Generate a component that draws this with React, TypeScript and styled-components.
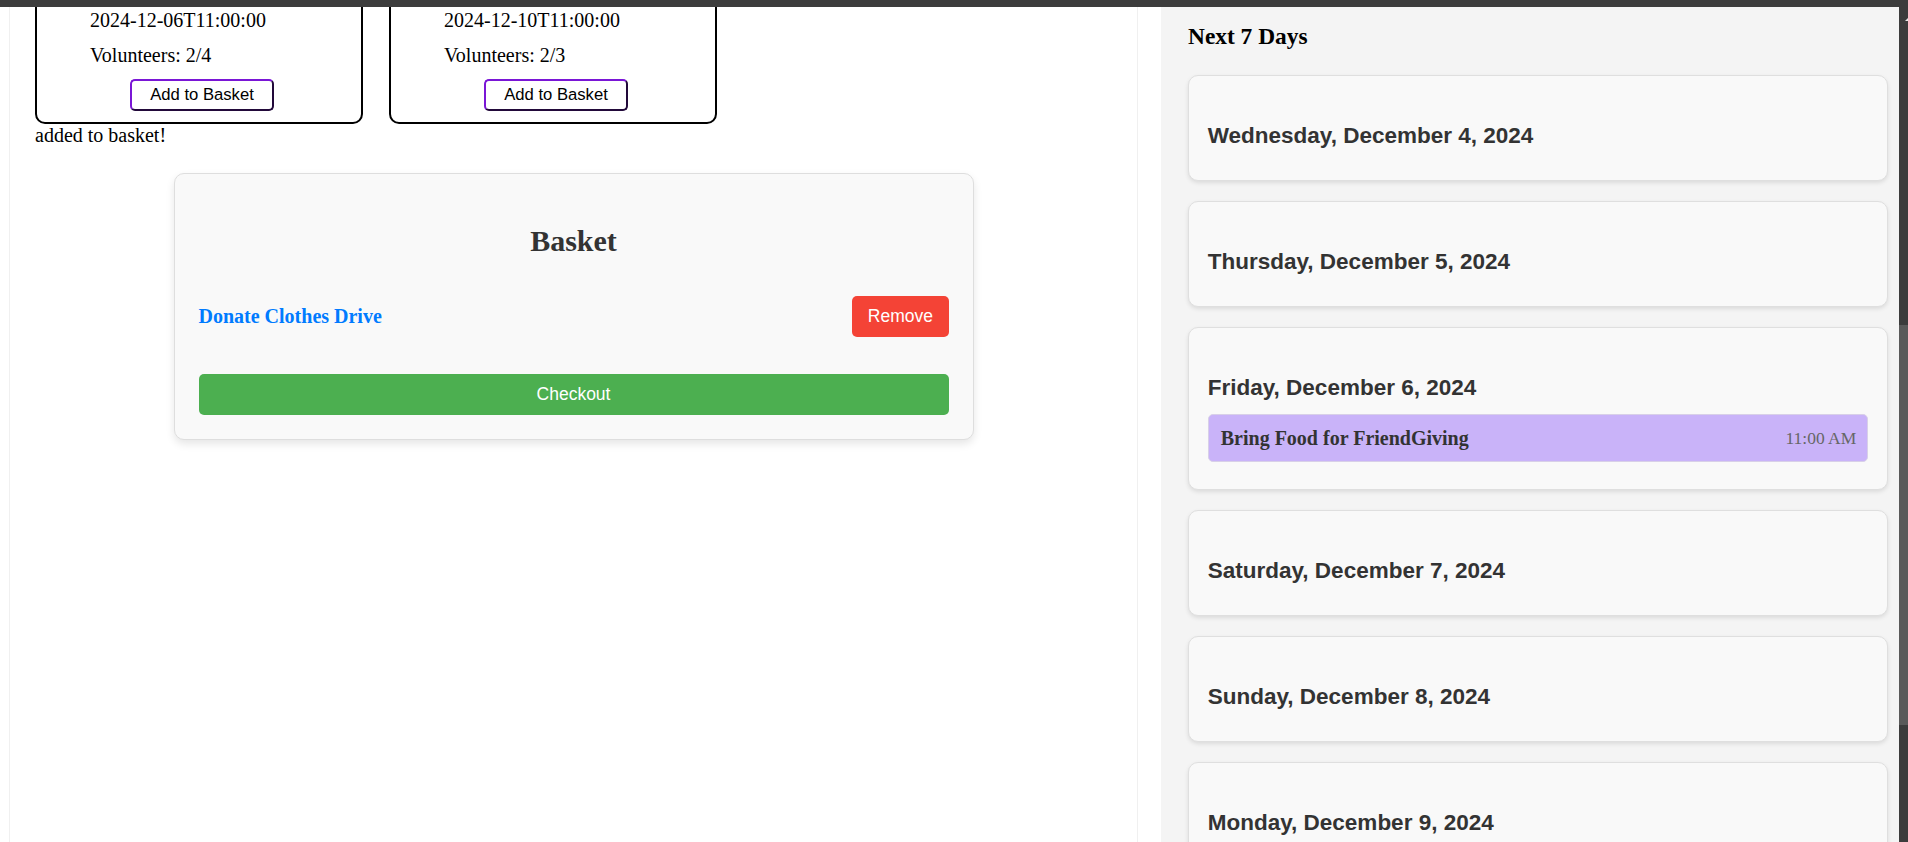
import React from "react";
import styled, { createGlobalStyle } from "styled-components";

const GlobalStyle = createGlobalStyle`
  html, body {
    margin: 0;
    padding: 0;
    background: #ffffff;
    overflow: hidden;
  }
  body {
    font-family: "Liberation Serif", "Times New Roman", serif;
    font-size: 20px;
    color: #000;
  }
  * { box-sizing: border-box; }
`;

const Screen = styled.div`
  display: flex;
  flex-direction: column;
  width: 1908px;
  height: 842px;
  overflow: hidden;
`;

const TopBar = styled.div`
  flex: none;
  height: 7px;
  background: #3c3c3c;
`;

const Body = styled.div`
  flex: 1;
  min-height: 0;
  display: flex;
`;

const Main = styled.main`
  flex: none;
  margin-left: 9px;
  width: 1129px;
  border-left: 1px solid #f0f0f0;
  border-right: 1px solid #f0f0f0;
  padding: 0 25px;
  overflow: hidden;
`;

const EventRow = styled.div`
  display: flex;
  gap: 26px;
  margin-top: -12px;
`;

const EventCard = styled.div`
  width: 328px;
  border: 2px solid #000;
  border-radius: 10px;
  padding: 12px 53px 11px 53px;
  display: flex;
  flex-direction: column;
  gap: 12px;
`;

const CardLine = styled.p`
  margin: 0;
  line-height: 23px;
  font-size: 20px;
`;

const AddButton = styled.button`
  align-self: center;
  margin-left: 6px;
  height: 32px;
  padding: 0 18px;
  background: #ffffff;
  border: 2px solid;
  border-color: #7a16d6 #22093a #22093a #7a16d6;
  border-radius: 5px;
  font-family: "Liberation Sans", Arial, sans-serif;
  font-size: 16.67px;
  color: #000;
  line-height: 18px;
`;

const Status = styled.div`
  line-height: 23px;
  font-size: 20px;
`;

const BasketPanel = styled.section`
  width: 800px;
  margin: 26px auto 0;
  padding: 24px;
  background: #f9f9f9;
  border: 1px solid #dedede;
  border-radius: 10px;
  box-shadow: 0 4px 8px rgba(0, 0, 0, 0.1);
`;

const BasketTitle = styled.h2`
  margin: 25px 0;
  font-size: 30px;
  line-height: 35px;
  text-align: center;
  color: #333;
  font-weight: bold;
`;

const BasketItem = styled.div`
  display: flex;
  align-items: center;
  justify-content: space-between;
  padding: 13px 0;
`;

const ItemName = styled.span`
  font-weight: bold;
  font-size: 20px;
  color: #007bff;
`;

const ActionButton = styled.button<{ $variant: "remove" | "checkout" }>`
  height: 41px;
  padding: 0 15.5px;
  border: none;
  border-radius: 5px;
  color: #ffffff;
  font-family: "Liberation Sans", Arial, sans-serif;
  font-size: 17.5px;
  background: ${(p) => (p.$variant === "remove" ? "#f44336" : "#4caf50")};
  width: ${(p) => (p.$variant === "checkout" ? "100%" : "auto")};
  margin-top: ${(p) => (p.$variant === "checkout" ? "24px" : "0")};
  display: block;
`;

const Gap = styled.div`
  flex: none;
  width: 23px;
`;

const Sidebar = styled.aside`
  flex: none;
  width: 738px;
  background: #f4f4f4;
  padding: 16px 11px 0 27px;
  overflow: hidden;
`;

const SidebarTitle = styled.h3`
  margin: 0 0 25px;
  font-size: 23.4px;
  line-height: 27px;
  font-weight: bold;
  color: #000;
`;

const DayCard = styled.div`
  background: #f9f9f9;
  border: 1px solid #dfdfdf;
  border-radius: 10px;
  padding: 18px 18.75px 18px;
  margin-bottom: 20px;
  box-shadow: 0 2px 4px rgba(0, 0, 0, 0.1);
`;

const DayTitle = styled.h4`
  margin: 29px 0 14px;
  font-family: "Liberation Sans", Arial, sans-serif;
  font-size: 22.5px;
  line-height: 25px;
  font-weight: bold;
  color: #333;
`;

const DayEvent = styled.div`
  display: flex;
  align-items: center;
  justify-content: space-between;
  height: 48px;
  padding: 0 11px 0 12px;
  margin-top: 1px;
  margin-bottom: 9px;
  background: #c9b3f9;
  border: 1px solid #d8d0e8;
  border-radius: 5px;
`;

const DayEventName = styled.span`
  font-weight: bold;
  font-size: 20px;
  color: #333;
`;

const DayEventTime = styled.span`
  font-size: 17.5px;
  color: #666;
`;

const Scrollbar = styled.div`
  flex: none;
  width: 9px;
  background: #3c3c3c;
  display: flex;
  flex-direction: column;
  align-items: flex-end;
`;

const ScrollArrow = styled.div`
  margin-top: 11px;
  width: 0;
  height: 0;
  border-left: 3px solid transparent;
  border-right: 0 solid transparent;
  border-bottom: 3px solid #e8e8e8;
`;

const ScrollThumb = styled.div`
  margin-top: 304px;
  width: 9px;
  height: 400px;
  background: #5a5a5a;
`;

const events = [
  { date: "2024-12-06T11:00:00", volunteers: "2/4" },
  { date: "2024-12-10T11:00:00", volunteers: "2/3" },
];

const days = [
  { label: "Wednesday, December 4, 2024", items: [] as { name: string; time: string }[] },
  { label: "Thursday, December 5, 2024", items: [] },
  {
    label: "Friday, December 6, 2024",
    items: [{ name: "Bring Food for FriendGiving", time: "11:00 AM" }],
  },
  { label: "Saturday, December 7, 2024", items: [] },
  { label: "Sunday, December 8, 2024", items: [] },
  { label: "Monday, December 9, 2024", items: [] },
];

export default function App() {
  return (
    <Screen>
      <GlobalStyle />
      <TopBar />
      <Body>
        <Main>
          <EventRow>
            {events.map((e) => (
              <EventCard key={e.date}>
                <CardLine>{e.date}</CardLine>
                <CardLine>Volunteers: {e.volunteers}</CardLine>
                <AddButton>Add to Basket</AddButton>
              </EventCard>
            ))}
          </EventRow>
          <Status>added to basket!</Status>
          <BasketPanel>
            <BasketTitle>Basket</BasketTitle>
            <BasketItem>
              <ItemName>Donate Clothes Drive</ItemName>
              <ActionButton $variant="remove">Remove</ActionButton>
            </BasketItem>
            <ActionButton $variant="checkout">Checkout</ActionButton>
          </BasketPanel>
        </Main>
        <Gap />
        <Sidebar>
          <SidebarTitle>Next 7 Days</SidebarTitle>
          {days.map((d) => (
            <DayCard key={d.label}>
              <DayTitle>{d.label}</DayTitle>
              {d.items.map((it) => (
                <DayEvent key={it.name}>
                  <DayEventName>{it.name}</DayEventName>
                  <DayEventTime>{it.time}</DayEventTime>
                </DayEvent>
              ))}
            </DayCard>
          ))}
        </Sidebar>
        <Scrollbar>
          <ScrollArrow />
          <ScrollThumb />
        </Scrollbar>
      </Body>
    </Screen>
  );
}
